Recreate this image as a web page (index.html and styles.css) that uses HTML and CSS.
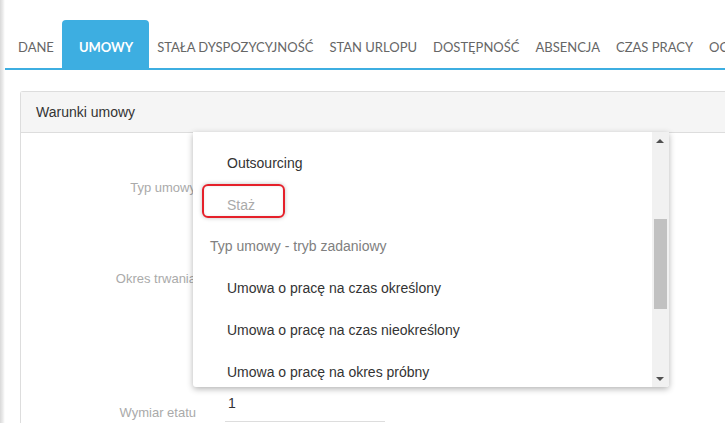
FILE: index.html
```html
<!DOCTYPE html>
<html lang="pl">
<head>
<meta charset="utf-8">
<title>Umowy</title>
<link rel="stylesheet" href="styles.css">
</head>
<body>
<div class="page">
  <nav class="tabs">
    <span class="tab">DANE</span>
    <span class="tab active">UMOWY</span>
    <span class="tab">STAŁA DYSPOZYCYJNOŚĆ</span>
    <span class="tab">STAN URLOPU</span>
    <span class="tab">DOSTĘPNOŚĆ</span>
    <span class="tab">ABSENCJA</span>
    <span class="tab">CZAS PRACY</span>
    <span class="tab">OCENY</span>
  </nav>
  <section class="panel">
    <header class="panel-head">Warunki umowy</header>
    <div class="panel-body">
      <div class="row row-type">
        <label class="lbl">Typ umowy</label>
      </div>
      <div class="row row-period">
        <label class="lbl">Okres trwania</label>
      </div>
      <div class="row row-etat">
        <label class="lbl lbl-etat">Wymiar etatu</label>
        <div class="field">1</div>
      </div>
      <div class="dropdown">
        <ul class="options">
          <li class="opt">Outsourcing</li>
          <li class="opt opt-muted">Staż<span class="mark"></span></li>
          <li class="opt group">Typ umowy - tryb zadaniowy</li>
          <li class="opt">Umowa o pracę na czas określony</li>
          <li class="opt">Umowa o pracę na czas nieokreślony</li>
          <li class="opt">Umowa o pracę na okres próbny</li>
        </ul>
        <div class="scrollbar">
          <span class="arrow up"></span>
          <span class="thumb"></span>
          <span class="arrow down"></span>
        </div>
      </div>
    </div>
  </section>
</div>
</body>
</html>
```
FILE: styles.css
```css
html, body {
  margin: 0;
  padding: 0;
  height: 100%;
  overflow: hidden;
}
body {
  background: #fff linear-gradient(to right, #d9d9d9 0, #e6e6e6 2px, #ededed 3px, #f7f7f7 4px, #fff 5px) no-repeat;
  background-size: 5px 100%;
  font-family: "Liberation Sans", Arial, sans-serif;
}
.page {
  padding: 20px 0 0 5px;
  overflow: hidden;
}
.tabs {
  display: flex;
  white-space: nowrap;
  padding-left: 5px;
  border-bottom: 2px solid #3daee1;
  height: 48px;
  font-family: Lato, "Liberation Sans", sans-serif;
  font-size: 13px;
  color: #666;
  overflow: hidden;
}
.tab {
  display: flex;
  align-items: center;
  padding: 3px 8px 0;
  height: 47px;
  flex: none;
}
.tab.active {
  background: #3daee1;
  color: #fff;
  font-weight: 700;
  padding: 3px 16px 0 17px;
  border-radius: 4px 4px 0 0;
}
.panel {
  margin: 21px 0 0 15px;
  border: 1px solid #ddd;
  border-right: none;
  border-bottom: none;
  border-radius: 3px 0 0 0;
  height: 331px;
}
.panel-head {
  background: #f5f5f5;
  height: 40px;
  line-height: 40px;
  padding-left: 15px;
  font-size: 14px;
  color: #333;
  border-bottom: 1px solid #ddd;
}
.panel-body {
  position: relative;
  padding-top: 47px;
}
.row {
  display: flex;
  align-items: flex-start;
}
.lbl {
  width: 175px;
  text-align: right;
  font-size: 13px;
  line-height: 16px;
  color: #aaa;
  flex: none;
}
.row-period {
  margin-top: 75px;
}
.row-etat {
  margin-top: 108px;
}
.lbl-etat {
  padding-top: 10px;
}
.field {
  margin-left: 29px;
  width: 157px;
  padding-left: 3px;
  font-size: 14px;
  line-height: 16px;
  color: #333;
  padding-bottom: 10px;
  border-bottom: 1px solid #ddd;
}
.dropdown {
  position: absolute;
  left: 172px;
  top: -1px;
  width: 476px;
  height: 255px;
  background: #fff;
  box-shadow: 0 2px 6px rgba(0, 0, 0, 0.3);
  border-radius: 0 0 3px 3px;
  display: flex;
  overflow: hidden;
}
.options {
  list-style: none;
  margin: 0;
  padding: 10px 0 0;
  flex: 1;
  font-size: 14px;
  color: #333;
}
.opt {
  position: relative;
  height: 42px;
  line-height: 42px;
  padding-left: 34px;
  white-space: nowrap;
}
.opt-muted {
  color: #aaa;
}
.group {
  padding-left: 17px;
  color: #808080;
  height: 41px;
  line-height: 41px;
}
.mark {
  position: absolute;
  left: 9px;
  top: 0;
  width: 79px;
  height: 30px;
  border: 2px solid #e5202a;
  border-radius: 6px;
  box-shadow: 0 0 4px rgba(0, 0, 0, 0.25), inset 0 0 3px rgba(0, 0, 0, 0.1);
}
.scrollbar {
  position: relative;
  width: 17px;
  background: #f1f1f1;
  flex: none;
}
.thumb {
  position: absolute;
  left: 2px;
  top: 87px;
  width: 13px;
  height: 90px;
  background: #c1c1c1;
}
.arrow {
  position: absolute;
  left: 4px;
  width: 0;
  height: 0;
  border-left: 4px solid transparent;
  border-right: 4px solid transparent;
}
.arrow.up {
  top: 7px;
  border-bottom: 4px solid #505050;
}
.arrow.down {
  top: 245px;
  border-top: 4px solid #505050;
}
```
